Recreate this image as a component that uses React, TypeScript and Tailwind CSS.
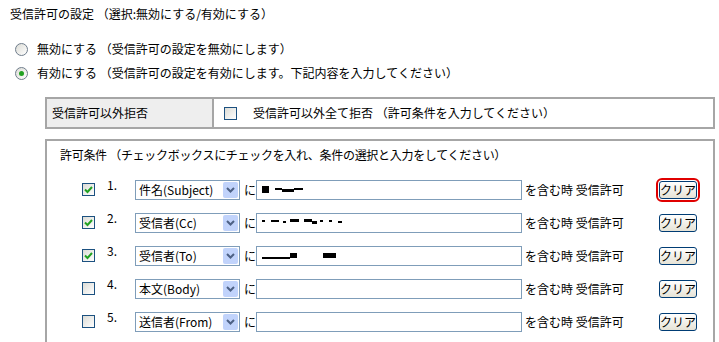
import React from 'react';

type Rule = {
  no: number;
  field: string;
  checked: boolean;
  masked: { w: number; h: number; gap: number; dy: number }[];
};

const rules: Rule[] = [
  {
    no: 1,
    field: '件名(Subject)',
    checked: true,
    masked: [
      { w: 7, h: 7, gap: 6, dy: 0 },
      { w: 7, h: 2, gap: 0, dy: -1 },
      { w: 12, h: 3, gap: 0, dy: 1 },
      { w: 9, h: 2, gap: 0, dy: -1 },
    ],
  },
  {
    no: 2,
    field: '受信者(Cc)',
    checked: true,
    masked: [
      { w: 3, h: 2, gap: 6, dy: -2 },
      { w: 8, h: 2, gap: 4, dy: -2 },
      { w: 3, h: 2, gap: 4, dy: -1 },
      { w: 9, h: 3, gap: 5, dy: -2 },
      { w: 8, h: 3, gap: 0, dy: -2 },
      { w: 5, h: 3, gap: 3, dy: 0 },
      { w: 3, h: 2, gap: 6, dy: -2 },
      { w: 3, h: 2, gap: 6, dy: -2 },
      { w: 4, h: 2, gap: 0, dy: -1 },
    ],
  },
  {
    no: 3,
    field: '受信者(To)',
    checked: true,
    masked: [
      { w: 28, h: 2, gap: 0, dy: 2 },
      { w: 7, h: 5, gap: 26, dy: 0 },
      { w: 13, h: 5, gap: 0, dy: 0 },
    ],
  },
  { no: 4, field: '本文(Body)', checked: false, masked: [] },
  { no: 5, field: '送信者(From)', checked: false, masked: [] },
];

const Radio = ({ on }: { on?: boolean }) => (
  <span className="flex h-[13px] w-[13px] items-center justify-center rounded-full border border-[#6f7d8c] bg-gradient-to-br from-[#dcdcd6] to-white">
    {on && <span className="h-[5px] w-[5px] rounded-full bg-[#21a121]" />}
  </span>
);

const Check = ({ on }: { on?: boolean }) => (
  <span className="flex h-[13px] w-[13px] shrink-0 items-center justify-center border border-[#1c5180] bg-gradient-to-br from-[#dcdcd6] to-white">
    {on && (
      <svg width="9" height="9" viewBox="0 0 9 9">
        <path d="M1 4.5 L3.5 7 L8 2" stroke="#21a121" strokeWidth="2" fill="none" />
      </svg>
    )}
  </span>
);

const App: React.FC = () => {
  return (
    <div
      className="h-[342px] w-[719px] overflow-hidden bg-white pl-[10px] pt-[6px] text-[12px] leading-4 text-black"
      style={{ fontFamily: '"Noto Sans CJK JP", sans-serif' }}
    >
      <div className="h-4">受信許可の設定 （選択:無効にする/有効にする）</div>

      <div className="mt-[15px]">
        <div className="flex h-6 items-center gap-2 pl-[5px]">
          <Radio />
          <span className="ml-[1px]">無効にする （受信許可の設定を無効にします）</span>
        </div>
        <div className="flex h-6 items-center gap-2 pl-[5px]">
          <Radio on />
          <span className="ml-[1px]">有効にする （受信許可の設定を有効にします。下記内容を入力してください）</span>
        </div>
      </div>

      {/* 拒否設定 */}
      <div className="ml-[35px] mt-3 flex h-[32px] w-[670px] border-2 border-[#a6a6a6]">
        <div className="flex w-[167px] items-center border-r-2 border-[#a6a6a6] bg-[#eeeeee] pl-[5px]">
          受信許可以外拒否
        </div>
        <div className="flex items-center pl-[10px]">
          <Check />
          <span className="ml-[16px]">受信許可以外全て拒否 （許可条件を入力してください）</span>
        </div>
      </div>

      {/* 許可条件 */}
      <div className="ml-[35px] mt-[10px] w-[670px] border-x-2 border-t-2 border-[#a6a6a6] pb-10">
        <div className="h-[32px] pl-[13px] pt-[6px] tracking-[-0.3px]">
          許可条件 （チェックボックスにチェックを入れ、条件の選択と入力をしてください）
        </div>
        {rules.map((r, i) => (
          <div key={r.no} className="flex h-[33px] items-center pl-[35px]">
            <Check on={r.checked} />
            <span className="mb-[9px] ml-[12px] w-[28px]">{r.no}.</span>
            <div className="flex h-[20px] w-[105px] items-center justify-between border border-[#7f9db9] bg-white pl-[3px] pr-[1px]">
              <span className="whitespace-nowrap">{r.field}</span>
              <span className="flex h-[16px] w-[15px] items-center justify-center rounded-[2px] bg-[#c1d3fb]">
                <svg width="9" height="6" viewBox="0 0 9 6">
                  <path d="M1 1 L4.5 4.5 L8 1" stroke="#4d6185" strokeWidth="2" fill="none" />
                </svg>
              </span>
            </div>
            <span className="ml-[4px] w-[12px]">に</span>
            <div className="flex h-[20px] w-[266px] items-center border border-[#7f9db9] bg-white pl-[5px]">
              {r.masked.map((m, k) => (
                <span
                  key={k}
                  className="block bg-black"
                  style={{ width: m.w, height: m.h, marginRight: m.gap, transform: `translateY(${m.dy}px)` }}
                />
              ))}
            </div>
            <span className="ml-[3px] w-[134px] whitespace-nowrap">を含む時 受信許可</span>
            <button
              className={
                'flex h-[18px] w-[38px] items-center justify-center rounded-[3px] border border-[#003c74] bg-gradient-to-b from-white to-[#e6e3d6] text-[12px] leading-none ' +
                (i === 0 ? 'outline outline-2 outline-offset-1 outline-[#e00000]' : '')
              }
            >
              クリア
            </button>
          </div>
        ))}
      </div>
    </div>
  );
};

export default App;
